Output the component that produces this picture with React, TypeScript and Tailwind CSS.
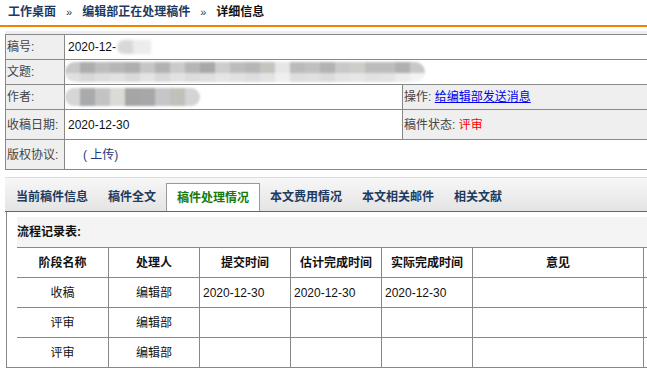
const titleTop = [
  "bg-[#c8c8c8]", "bg-[#adadaf]", "bg-[#bdbdbf]", "bg-[#b6b6b6]", "bg-[#afafaf]", "bg-[#c6c6c8]",
  "bg-[#b3b3b3]", "bg-[#cbcbcd]", "bg-[#b6b6b6]", "bg-[#a8a8a8]", "bg-[#cdcdcb]", "bg-[#bdbdbd]",
  "bg-[#b6b7b7]", "bg-[#c4c5bf]", "bg-[#e6e6e6]", "bg-[#bcbabc]", "bg-[#c0c0c0]", "bg-[#b3b3b3]",
  "bg-[#c9c9c9]", "bg-[#cecdc9]", "bg-[#bdbdbd]", "bg-[#bebcbe]", "bg-[#b0b0b2]", "bg-[#c8c8c6]",
];
const titleBottom = [
  "bg-[#e0e0e0]", "bg-[#d8d8d8]", "bg-[#dedede]", "bg-[#e2e2e2]", "bg-[#dadada]", "bg-[#e4e4e4]",
  "bg-[#d9d9d9]", "bg-[#e2e2e2]", "bg-[#dcdcdc]", "bg-[#dfdfdf]", "bg-[#e5e5e5]", "bg-[#e1e1e1]",
  "bg-[#dddddd]", "bg-[#e3e3e3]", "bg-[#efefef]", "bg-[#dedede]", "bg-[#e0e0e0]", "bg-[#dbdbdb]",
  "bg-[#e4e4e4]", "bg-[#e6e6e6]", "bg-[#e1e1e1]", "bg-[#e3e3e3]", "bg-[#ececec]", "bg-[#f3f3f3]",
];
const authorBlocks = [
  "bg-[#d6d6d6]", "bg-[#a9aaac]", "bg-[#c3c3c3]", "bg-[#dadad6]", "bg-[#a5a5a5]",
  "bg-[#a7a7a9]", "bg-[#c6c6c8]", "bg-[#c2c0ba]", "bg-[#d4d4d6]",
];

const tabs = ["当前稿件信息", "稿件全文", "稿件处理情况", "本文费用情况", "本文相关邮件", "相关文献"];

const cols = ["w-[92px]", "w-[91px]", "w-[91px]", "w-[91px]", "w-[91px]", "w-[171px]", "w-[60px]"];
const head = ["阶段名称", "处理人", "提交时间", "估计完成时间", "实际完成时间", "意见", ""];
const rows = [
  ["收稿", "编辑部", "2020-12-30", "2020-12-30", "2020-12-30", "", ""],
  ["评审", "编辑部", "", "", "", "", ""],
  ["评审", "编辑部", "", "", "", "", ""],
];

function Label({ children }: { children: React.ReactNode }) {
  return (
    <div className="w-[59px] shrink-0 h-full border-r border-[#888] bg-[#efefef] pl-[1px] flex items-center text-[#444]">
      {children}
    </div>
  );
}

export default function App() {
  return (
    <div className="w-[647px] h-[370px] overflow-hidden bg-white text-[12px] leading-[14px] text-[#111] font-['Liberation_Sans','Noto_Sans_CJK_SC',sans-serif]">
      {/* breadcrumb */}
      <div className="h-[25px] pl-[8px] pb-[2px] flex items-center font-bold text-[#1d3a5f]">
        <span>工作桌面</span>
        <span className="mx-[10px] text-[11px] font-normal">»</span>
        <span>编辑部正在处理稿件</span>
        <span className="mx-[10px] text-[11px] font-normal">»</span>
        <span className="text-[#111]">详细信息</span>
      </div>
      <div className="h-[2px] bg-[#f08300]" />

      <div className="mt-[4px] ml-[5px] h-[3px] bg-[#eeeeee]" />

      {/* info table */}
      <div className="ml-[5px] w-[760px] border-t border-l border-[#888]">
        <div className="h-[25px] flex border-b border-[#888]">
          <Label>稿号:</Label>
          <div className="flex-1 pl-[3px] flex items-center">
            <span>2020-12-</span>
            <div className="ml-[1px] flex blur-[1.5px]">
              <div className="w-[16px] h-[14px] bg-[#d8d8d8] rounded-l-full" />
              <div className="w-[18px] h-[14px] bg-[#ececec]" />
            </div>
          </div>
        </div>
        <div className="h-[25px] flex border-b border-[#888]">
          <Label>文题:</Label>
          <div className="flex-1 flex items-center">
            <div className="flex flex-col blur-[1px] rounded-l-full rounded-r-full overflow-hidden">
              <div className="flex">
                {titleTop.map((c, i) => (
                  <div key={i} className={`w-[15px] h-[11px] ${c}`} />
                ))}
              </div>
              <div className="flex">
                {titleBottom.map((c, i) => (
                  <div key={i} className={`w-[15px] h-[9px] ${c}`} />
                ))}
              </div>
            </div>
          </div>
        </div>
        <div className="h-[25px] flex border-b border-[#888]">
          <Label>作者:</Label>
          <div className="w-[338px] shrink-0 h-full border-r border-[#888] flex items-center">
            <div className="flex blur-[1px] rounded-full overflow-hidden">
              {authorBlocks.map((c, i) => (
                <div key={i} className={`w-[15px] h-[18px] ${c}`} />
              ))}
            </div>
          </div>
          <div className="flex-1 bg-[#efefef] pl-[1px] flex items-center text-[#444]">
            操作:&nbsp;
            <a className="text-[#0000ee] underline">给编辑部发送消息</a>
          </div>
        </div>
        <div className="h-[30px] flex border-b border-[#888]">
          <Label>收稿日期:</Label>
          <div className="w-[338px] shrink-0 h-full border-r border-[#888] pl-[3px] flex items-center">
            2020-12-30
          </div>
          <div className="flex-1 bg-[#efefef] pl-[1px] flex items-center text-[#444]">
            稿件状态:&nbsp;<span className="text-[#ff0000]">评审</span>
          </div>
        </div>
        <div className="h-[30px] flex border-b border-[#888]">
          <Label>版权协议:</Label>
          <div className="flex-1 pl-[18px] flex items-center text-[#1d3a7a]">
            ( 上传)
          </div>
        </div>
      </div>

      {/* tabs */}
      <div className="mt-[7px] ml-[5px] h-[35px] border-t border-t-[#dddddd] border-b border-b-[#6b6b2e] bg-linear-to-b from-[#f7f7f7] to-[#e4e4e4] flex items-end pl-[1px]">
        {tabs.map((t, i) =>
          i === 2 ? (
            <div
              key={t}
              className="h-[28px] px-[10px] flex items-center bg-white border border-b-0 border-[#999] font-bold text-[#177a0c]"
            >
              {t}
            </div>
          ) : (
            <div key={t} className="h-[28px] px-[10px] flex items-center font-bold text-[#1d3a5f]">
              {t}
            </div>
          )
        )}
      </div>

      {/* panel */}
      <div className="ml-[6px] w-[700px] h-[156px] border-l border-b border-[#888] pt-[5px] pl-[10px]">
        <div className="h-[30px] bg-[#f4f4f4] flex items-center font-bold">流程记录表:</div>
        <div className="border-t border-[#888]">
          <div className="h-[30px] flex border-b border-[#888]">
            {head.map((h, i) => (
              <div key={i} className={`${cols[i]} shrink-0 h-full border-r border-[#888] flex items-center justify-center font-bold`}>
                {h}
              </div>
            ))}
          </div>
          {rows.map((r, ri) => (
            <div key={ri} className={`h-[30px] flex ${ri < rows.length - 1 ? "border-b border-[#888]" : ""}`}>
              {r.map((c, i) => (
                <div
                  key={i}
                  className={`${cols[i]} shrink-0 h-full border-r border-[#888] flex items-center ${
                    i < 2 ? "justify-center" : "pl-[3px]"
                  }`}
                >
                  {c}
                </div>
              ))}
            </div>
          ))}
        </div>
      </div>
    </div>
  );
}
